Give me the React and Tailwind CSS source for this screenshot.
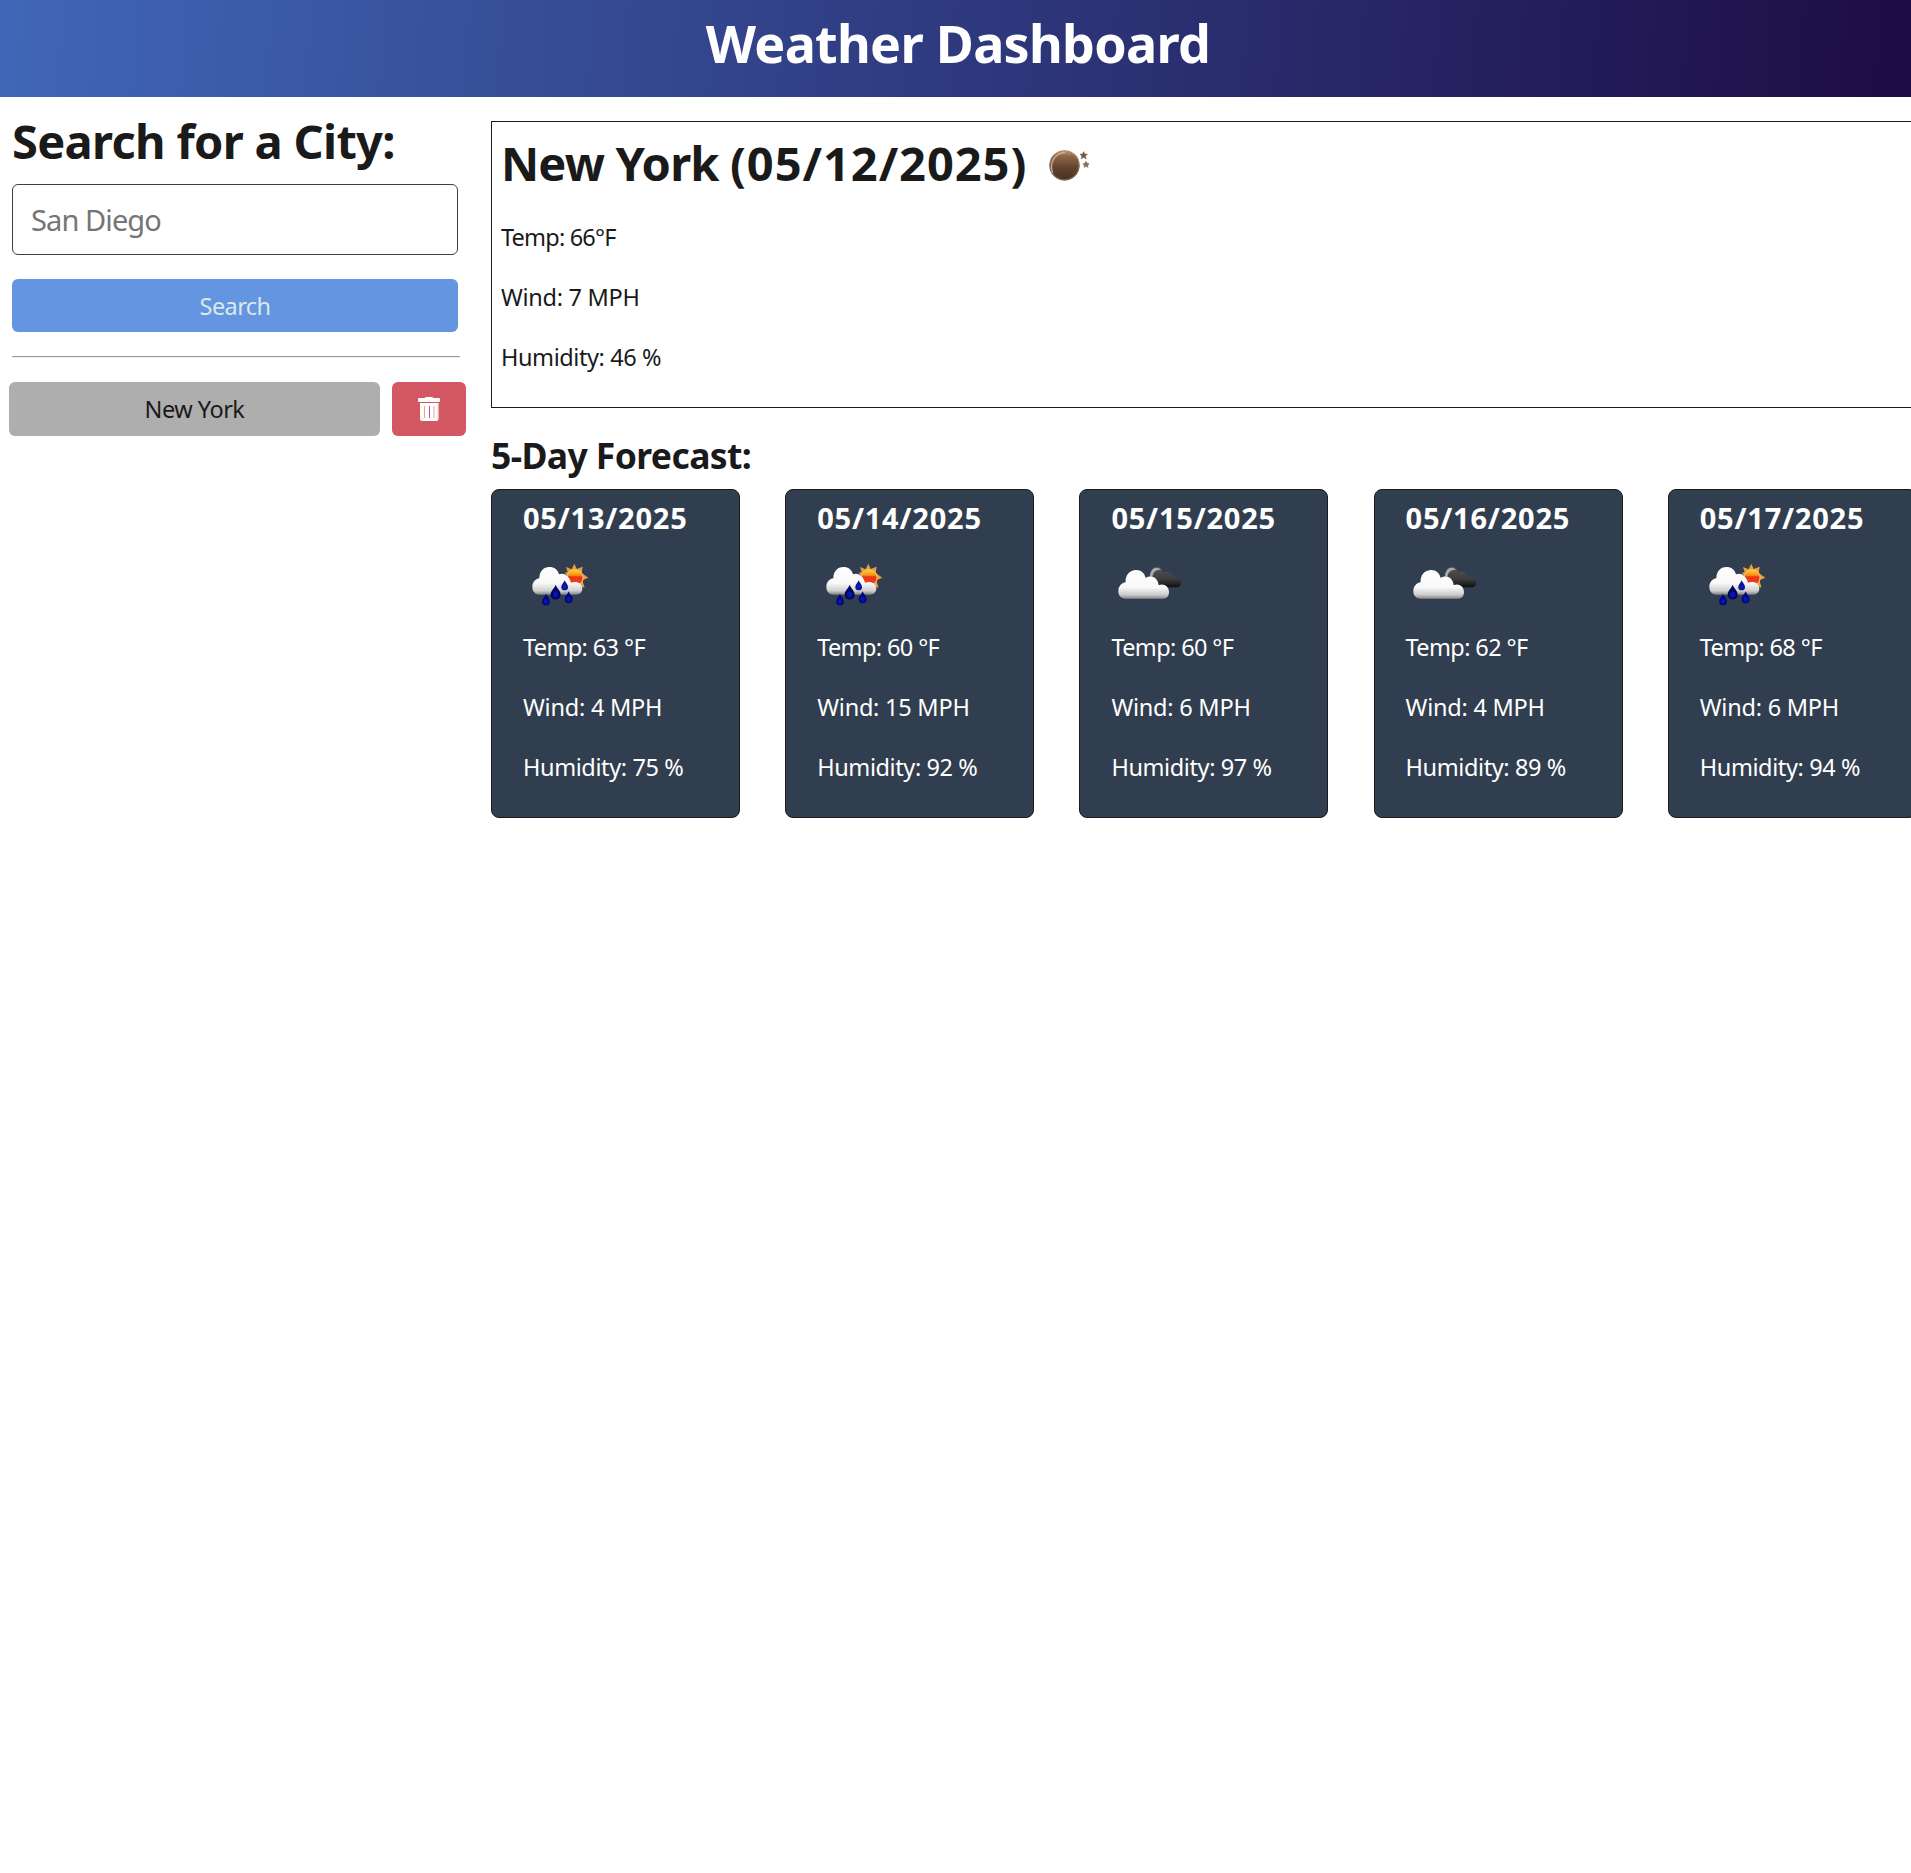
import React, { useId } from "react";

const days = [
  { date: "05/13/2025", icon: "rain", temp: 63, wind: 4, humidity: 75 },
  { date: "05/14/2025", icon: "rain", temp: 60, wind: 15, humidity: 92 },
  { date: "05/15/2025", icon: "clouds", temp: 60, wind: 6, humidity: 97 },
  { date: "05/16/2025", icon: "clouds", temp: 62, wind: 4, humidity: 89 },
  { date: "05/17/2025", icon: "rain", temp: 68, wind: 6, humidity: 94 },
];

function Drop({ x, y, s, fill }) {
  return (
    <g transform={`translate(${x} ${y}) scale(${s})`}>
      <path d="M0-20C3-11 13-4 13 6A13 13 0 0 1-13 6C-13-4-3-11 0-20Z" fill={fill} />
      <ellipse cx="0" cy="6" rx="7" ry="8" fill="#0a22dc" opacity=".6" />
    </g>
  );
}

function RainIcon() {
  const id = useId();
  return (
    <svg viewBox="0 0 240 210" className="-ml-[3px] h-[70px] w-20">
      <defs>
        <linearGradient id={id + "c"} gradientUnits="userSpaceOnUse" x1="0" y1="54" x2="0" y2="138">
          <stop offset="0" stopColor="#ffffff" />
          <stop offset=".58" stopColor="#f8f8f8" />
          <stop offset=".85" stopColor="#cfcfcf" />
          <stop offset="1" stopColor="#77797c" />
        </linearGradient>
        <linearGradient id={id + "s"} x1="0" y1="0" x2="0" y2="1">
          <stop offset="0" stopColor="#ffd21f" />
          <stop offset=".35" stopColor="#f58a1c" />
          <stop offset=".45" stopColor="#ea3410" />
          <stop offset="1" stopColor="#f0441c" />
        </linearGradient>
      </defs>
      <path
        d="M163 44L170 60L188 53L185 72L205 86L187 94L194 116L176 110L163 112L140 100L142 80L134 71L143 70L138 54L155 61Z"
        fill="#e9a03a"
      />
      <circle cx="165" cy="86" r="26" fill="#f3b872" />
      <circle cx="165" cy="86" r="22.500" fill={`url(#${id}s)`} />
      <path
        d="M58 137C44 137 37 125 37 113C37 100 46 90 58 88C58 68 70 54 88 54C103 54 114 62 117 76C130 70 147 78 153 101C171 95 187 103 187 118C187 130 179 137 167 137Z"
        fill={`url(#${id}c)`}
      />
      <Drop x={78} y={152} s={0.9} fill="#02077c" />
      <Drop x={107} y={130} s={1.15} fill="#02045f" />
      <Drop x={134} y={109} s={0.78} fill="#0a1590" />
      <Drop x={146} y={145} s={0.92} fill="#02077c" />
    </svg>
  );
}

function CloudsIcon() {
  const id = useId();
  return (
    <svg viewBox="0 0 240 210" className="-ml-0.5 h-[70px] w-20">
      <defs>
        <linearGradient id={id + "c"} gradientUnits="userSpaceOnUse" x1="0" y1="63" x2="0" y2="150">
          <stop offset="0" stopColor="#ffffff" />
          <stop offset=".6" stopColor="#f9f9f9" />
          <stop offset=".85" stopColor="#cccccc" />
          <stop offset="1" stopColor="#858585" />
        </linearGradient>
        <linearGradient id={id + "d"} gradientUnits="userSpaceOnUse" x1="0" y1="54" x2="0" y2="115">
          <stop offset="0" stopColor="#555555" />
          <stop offset=".6" stopColor="#3c3c3c" />
          <stop offset="1" stopColor="#0e0e0e" />
        </linearGradient>
      </defs>
      <path
        d="M122 84C122 65 130 54 142 54C152 54 160 60 162 70C173 63 189 70 193 84C208 84 217 91 217 100C217 109 211 115 202 115H130Z"
        fill={`url(#${id}d)`}
      />
      <path d="M123 83C123 67 131 57 142 56C149 56 154 59 157 63C143 60 132 69 130 84Z" fill="#a9abae" />
      <path
        d="M50 149C36 149 28 140 28 127C28 112 37 102 50 100C48 79 62 63 82 63C96 63 107 72 110 87C127 76 147 86 149 108C165 102 180 112 180 129C180 142 173 149 162 149Z"
        fill={`url(#${id}c)`}
      />
    </svg>
  );
}

function NightIcon() {
  const id = useId();
  return (
    <svg viewBox="0 0 180 150" className="h-[50px] w-[60px]">
      <defs>
        <linearGradient id={id + "m"} x1="0" y1="0" x2="0" y2="1">
          <stop offset="0" stopColor="#c39a7b" />
          <stop offset=".2" stopColor="#8e6749" />
          <stop offset=".55" stopColor="#63452f" />
          <stop offset="1" stopColor="#48301e" />
        </linearGradient>
      </defs>
      <circle cx="73.500" cy="76" r="45.500" fill={`url(#${id}m)`} />
      <circle cx="73.500" cy="76" r="43.500" fill="none" stroke="#a88b76" strokeWidth="3" opacity=".6" />
      <path d="M38 98C28 70 42 40 75 37" fill="none" stroke="#dcc0aa" strokeWidth="4" opacity=".8" />
      <path d="M131 35L134 42L142 43L136 48L138 56L131 52L124 56L126 48L120 43L128 42Z" fill="#76573f" stroke="#76573f" strokeWidth="2" />
      <path d="M138 64L141 70L147 71L143 76L144 82L138 79L132 82L133 76L129 71L135 70Z" fill="#8a6b55" stroke="#8a6b55" strokeWidth="2" />
    </svg>
  );
}

function TrashIcon() {
  return (
    <svg viewBox="0 0 22 24" className="h-6 w-[22px]" fill="none">
      <path d="M1 1H7V.5Q7 0 8 0H14Q15 0 15 .5V1H21Q22 1 22 2V4Q22 5 21 5H1Q0 5 0 4V2Q0 1 1 1Z" fill="#fff" />
      <path d="M2 6H20.500V22Q20.500 24 18.500 24H4Q2 24 2 22Z" fill="#fff" />
      <path d="M6.500 9V21" stroke="#f0a080" />
      <path d="M11.500 9V21" stroke="#b855a8" />
      <path d="M16 9V21" stroke="#dba0c4" />
      <path d="M20 7V22" stroke="#ffc478" strokeWidth=".8" />
    </svg>
  );
}

export default function App() {
  return (
    <div className="min-h-screen overflow-hidden bg-white font-['Noto_Sans',sans-serif] text-[23.5px] leading-9 text-[#1a1a1a]">
      <header className="h-[97px] bg-[linear-gradient(95deg,#4067b7,#1d0c45)]">
        <h1 className="pl-[5px] text-center text-[52px] leading-[86px] font-bold tracking-[-0.7px] text-white">
          Weather Dashboard
        </h1>
      </header>

      <div className="flex">
        <aside className="w-[491px] shrink-0 pt-[15px] pl-3">
          <h2 className="text-[47px] leading-[58px] font-bold tracking-[-0.68px] whitespace-nowrap">
            Search for a City:
          </h2>
          <input
            type="text"
            placeholder="San Diego"
            className="mt-3.5 block h-[71px] w-[446px] rounded-md border border-[#404040] bg-white px-[18px] text-[29px] tracking-[-0.9px] placeholder:text-[#757575]"
          />
          <button className="mt-6 block h-[53px] w-[446px] rounded-md bg-[#6495e0] tracking-[-0.6px] text-[#dbe8ea]">
            Search
          </button>
          <hr className="mt-6 h-0.5 w-[448px] border-t border-b border-t-[#9a9a9a] border-b-[#eeeeee]" />
          <div className="mt-6 -ml-[3px] flex gap-3">
            <button className="h-[54px] w-[371px] rounded-md bg-[#aeaeae] tracking-[-0.5px]">New York</button>
            <button className="flex h-[54px] w-[74px] items-center justify-center rounded-md bg-[#d35864]">
              <TrashIcon />
            </button>
          </div>
        </aside>

        <main className="w-[1425.8px] shrink-0 pt-6">
          <section className="h-[287px] border border-[#1a1a1a] pt-[11px] pl-[9px]">
            <div className="flex items-start">
              <h2 className="w-[539px] text-[47px] leading-[60px] font-bold tracking-[-0.85px] whitespace-nowrap">
                New York <span className="tracking-[0.95px]">(05/12/2025)</span>
              </h2>
              <div className="pt-[7px]">
                <NightIcon />
              </div>
            </div>
            <div className="mt-[26px] space-y-6">
              <p className="tracking-[-0.8px]">Temp: 66°F</p>
              <p className="tracking-[-0.3px]">Wind: 7 MPH</p>
              <p className="tracking-[-0.42px]">Humidity: 46 %</p>
            </div>
          </section>

          <h3 className="mt-[25px] text-[35.5px] leading-[45px] font-bold tracking-[-0.6px]">5-Day Forecast:</h3>
          <div className="mt-[11px] flex justify-between">
            {days.map((d) => (
              <article
                key={d.date}
                className="h-[329px] w-[249px] rounded-lg border border-[#1a1a1a] bg-[#313e4f] pt-2.5 pl-[31px] text-white"
              >
                <h4 className="text-[29px] leading-9 font-bold tracking-[0.78px]">{d.date}</h4>
                <div className="mt-[13px] h-20">{d.icon === "rain" ? <RainIcon /> : <CloudsIcon />}</div>
                <div className="space-y-6">
                  <p className="tracking-[-0.62px]">Temp: {d.temp} °F</p>
                  <p className="tracking-[-0.24px]">Wind: {d.wind} MPH</p>
                  <p className="tracking-[-0.4px]">Humidity: {d.humidity} %</p>
                </div>
              </article>
            ))}
          </div>
        </main>
      </div>
    </div>
  );
}
